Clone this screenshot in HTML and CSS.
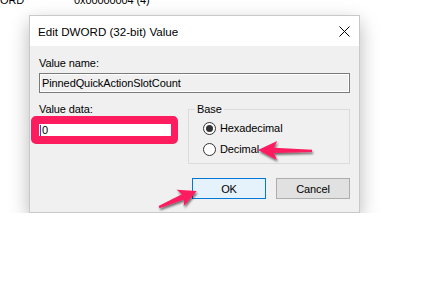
FILE: index.html
```html
<!DOCTYPE html>
<html lang="en">
<head>
  <meta charset="UTF-8" />
  <title>Edit DWORD (32-bit) Value</title>
  <link rel="stylesheet" href="styles.css">
</head>
<body>
  <div class="reg-row">
    <span class="reg-type">ORD</span>
    <span class="reg-data">0x00000004 (4)</span>
  </div>

  <div class="dialog">
    <div class="titlebar">
      <span class="title">Edit DWORD (32-bit) Value</span>
      <svg class="close" width="11" height="11" viewBox="0 0 11 11">
        <path d="M0.5 0.5 L10.5 10.5 M10.5 0.5 L0.5 10.5" stroke="#000" stroke-width="1" fill="none"/>
      </svg>
    </div>

    <div class="content">
      <div class="field-label">Value name:</div>
      <div class="name-box">PinnedQuickActionSlotCount</div>

      <div class="data-row">
        <div class="data-col">
          <div class="field-label">Value data:</div>
          <div class="highlight">
            <div class="data-box"><span class="caret"></span>0</div>
          </div>
        </div>
        <fieldset class="base-group">
          <legend>Base</legend>
          <label class="radio-row"><span class="radio checked"></span>Hexadecimal</label>
          <label class="radio-row"><span class="radio"></span>Decimal</label>
        </fieldset>
      </div>

      <div class="buttons">
        <button class="btn btn-default">OK</button>
        <button class="btn">Cancel</button>
      </div>
    </div>
  </div>

  <!-- pink annotation arrows drawn over the screenshot -->
  <svg class="annotations" width="441" height="287" viewBox="0 0 441 287">
    <defs>
      <filter id="arrowShadow" x="-20%" y="-50%" width="140%" height="200%">
        <feDropShadow dx="1" dy="2" stdDeviation="1.2" flood-color="#000" flood-opacity="0.55"/>
      </filter>
    </defs>
    <g filter="url(#arrowShadow)" fill="#fd1c5e">
      <path transform="translate(312 151) rotate(181)" d="M0 -1 L38 -2.6 L35 -9.5 L54 0 L35 9.5 L38 2.6 L0 1.2 Z"/>
      <path transform="translate(159 207) rotate(-23)" d="M0 -1 L26 -2.8 L23 -9 L41 0 L23 9 L26 2.8 L0 1.4 Z"/>
    </g>
  </svg>
</body>
</html>
```

FILE: styles.css
```css
body {
  margin: 0;
  background-color: #fff;
  font-family: 'Liberation Sans', Arial, sans-serif;
  font-size: 11px;
  line-height: 13px;
  letter-spacing: -0.1px;
  color: #000;
  overflow: hidden;
}
.reg-row {
  display: flex;
  margin-top: -6px;
  height: 13px;
}
.reg-type {
  width: 74px;
}
.dialog {
  width: 331px;
  margin: 8px 0 0 29px;
  box-sizing: border-box;
  border: 1px solid #c9c9c9;
  background-color: #f0f0f0;
  box-shadow: 0 7px 18px rgba(0, 0, 0, 0.28);
}
.titlebar {
  height: 30px;
  background-color: #fff;
  display: flex;
  align-items: center;
  justify-content: space-between;
  padding: 0 9px 0 8px;
}
.title {
  font-size: 11.6px;
  letter-spacing: 0;
}
.content {
  padding: 11px 9px 13px 9px;
}
.field-label {
  height: 13px;
}
.name-box {
  margin-top: 3px;
  height: 20px;
  box-sizing: border-box;
  border: 1px solid #7a7a7a;
  box-shadow: inset 0 0 0 1px #fff;
  padding-left: 2px;
  line-height: 18px;
}
.data-row {
  display: grid;
  grid-template-columns: 139px 162px;
  column-gap: 10px;
  margin-top: 10px;
}
.highlight {
  width: 147px;
  margin-left: -8px;
  box-sizing: border-box;
  border: 8px solid #fd1c5e;
  border-radius: 5px;
  border-right-width: 7px;
  background-color: #fff;
}
.data-box {
  height: 12px;
  line-height: 12px;
  display: flex;
  align-items: center;
  padding-left: 1px;
}
.caret {
  width: 1px;
  height: 11px;
  background-color: #1f4fd8;
  margin-right: 1px;
}
.base-group {
  margin: 0;
  padding: 2px 0 3px 6px;
  border: 1px solid #dcdcdc;
}
.base-group legend {
  padding: 0 2px;
}
.radio-row {
  display: flex;
  align-items: center;
  height: 21px;
  padding-left: 8px;
}
.radio {
  width: 13px;
  height: 13px;
  box-sizing: border-box;
  border: 1px solid #333;
  border-radius: 50%;
  background-color: #fff;
  margin-right: 4px;
  display: flex;
  align-items: center;
  justify-content: center;
}
.radio.checked::after {
  content: '';
  width: 7px;
  height: 7px;
  border-radius: 50%;
  background-color: #333;
}
.buttons {
  display: flex;
  justify-content: flex-end;
  gap: 10px;
  margin-top: 14px;
}
.btn {
  width: 74px;
  height: 21px;
  font-family: inherit;
  font-size: 11px;
  letter-spacing: -0.1px;
  color: #000;
  background-color: #e1e1e1;
  border: 1px solid #adadad;
  padding: 0;
}
.btn-default {
  background-color: #e5f1fb;
  border-color: #0078d7;
}
.annotations {
  position: absolute;
  top: 0;
  left: 0;
  pointer-events: none;
}
```
